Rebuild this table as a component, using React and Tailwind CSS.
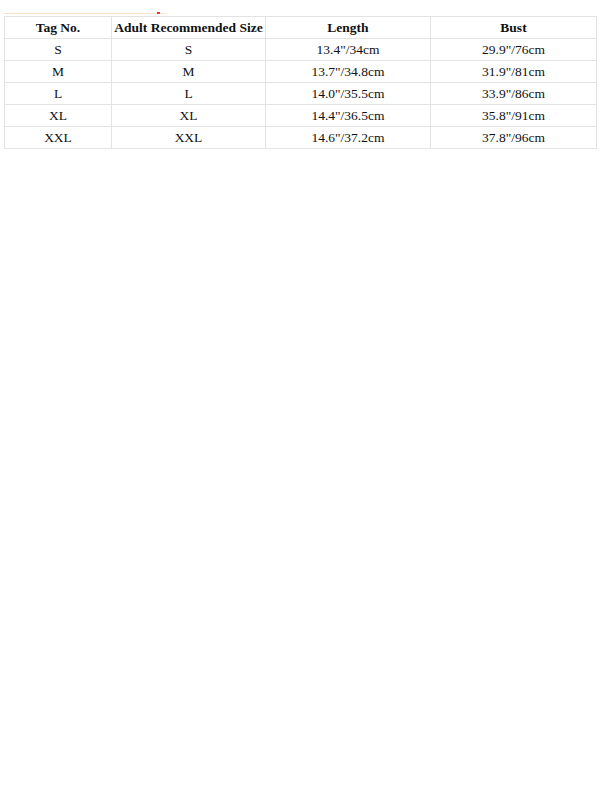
import React from "react";

const rows = [
    ["S", "S", "13.4\"/34cm", "29.9\"/76cm"],
    ["M", "M", "13.7\"/34.8cm", "31.9\"/81cm"],
    ["L", "L", "14.0\"/35.5cm", "33.9\"/86cm"],
    ["XL", "XL", "14.4\"/36.5cm", "35.8\"/91cm"],
    ["XXL", "XXL", "14.6\"/37.2cm", "37.8\"/96cm"],
];

export default function App() {
    return (
        <div className="w-[600px] h-[800px] bg-white pt-[13px] font-['Liberation_Serif',serif] text-[13.5px] text-[#111]">
            <div className="ml-[4px] w-[162px] h-[1px] bg-[#fbe3c8] relative">
                <div className="absolute left-[153px] top-[-1px] w-[3px] h-[2px] bg-[#e23b3b]" />
            </div>
            <table className="ml-[4px] mt-[2px] border-collapse table-fixed w-[592px]">
                <colgroup>
                    <col className="w-[107px]" />
                    <col className="w-[154px]" />
                    <col className="w-[165px]" />
                    <col className="w-[166px]" />
                </colgroup>
                <thead>
                    <tr className="h-[22px]">
                        {["Tag No.", "Adult Recommended Size", "Length", "Bust"].map((h) => (
                            <th key={h} className="border border-[#e3e3e3] font-bold text-center p-0 leading-none whitespace-nowrap">
                                {h}
                            </th>
                        ))}
                    </tr>
                </thead>
                <tbody>
                    {rows.map((r) => (
                        <tr key={r[0]} className="h-[22px]">
                            {r.map((c, i) => (
                                <td key={i} className="border border-[#e3e3e3] text-center p-0 leading-none">
                                    {c}
                                </td>
                            ))}
                        </tr>
                    ))}
                </tbody>
            </table>
        </div>
    );
}
